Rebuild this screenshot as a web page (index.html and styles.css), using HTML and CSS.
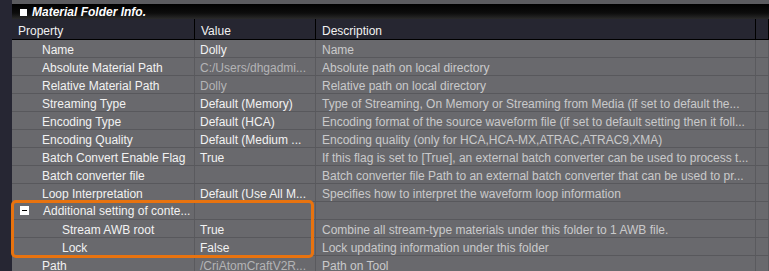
FILE: index.html
```html
<!DOCTYPE html>
<html lang="en">
<head>
  <meta charset="UTF-8">
  <title>Material Folder Info.</title>
  <link rel="stylesheet" href="styles.css">
</head>
<body>
  <div class="panel">
    <div class="side"></div>
    <div class="main">
      <div class="topline"></div>
      <div class="title-bar">
        <span class="check"></span>
        <span class="title">Material Folder Info.</span>
      </div>
      <div class="grid">
        <div class="row head">
          <div class="cell">Property</div>
          <div class="cell">Value</div>
          <div class="cell">Description</div>
          <div class="cell"></div>
        </div>
        <div class="row">
          <div class="cell prop">Name</div>
          <div class="cell">Dolly</div>
          <div class="cell desc">Name</div>
          <div class="cell"></div>
        </div>
        <div class="row">
          <div class="cell prop">Absolute Material Path</div>
          <div class="cell ro">C:/Users/dhgadmi...</div>
          <div class="cell desc">Absolute path on local directory</div>
          <div class="cell"></div>
        </div>
        <div class="row">
          <div class="cell prop">Relative Material Path</div>
          <div class="cell ro">Dolly</div>
          <div class="cell desc">Relative path on local directory</div>
          <div class="cell"></div>
        </div>
        <div class="row">
          <div class="cell prop">Streaming Type</div>
          <div class="cell">Default (Memory)</div>
          <div class="cell desc">Type of Streaming, On Memory or Streaming from Media (if set to default the...</div>
          <div class="cell"></div>
        </div>
        <div class="row">
          <div class="cell prop">Encoding Type</div>
          <div class="cell">Default (HCA)</div>
          <div class="cell desc">Encoding format of the source waveform file (if set to default setting then it foll...</div>
          <div class="cell"></div>
        </div>
        <div class="row">
          <div class="cell prop">Encoding Quality</div>
          <div class="cell">Default (Medium ...</div>
          <div class="cell desc">Encoding quality (only for HCA,HCA-MX,ATRAC,ATRAC9,XMA)</div>
          <div class="cell"></div>
        </div>
        <div class="row">
          <div class="cell prop">Batch Convert Enable Flag</div>
          <div class="cell">True</div>
          <div class="cell desc">If this flag is set to [True], an external batch converter can be used to process t...</div>
          <div class="cell"></div>
        </div>
        <div class="row">
          <div class="cell prop">Batch converter file</div>
          <div class="cell"></div>
          <div class="cell desc">Batch converter file Path to an external batch converter that can be used to pr...</div>
          <div class="cell"></div>
        </div>
        <div class="row">
          <div class="cell prop">Loop Interpretation</div>
          <div class="cell">Default (Use All M...</div>
          <div class="cell desc">Specifies how to interpret the waveform loop information</div>
          <div class="cell"></div>
        </div>
        <div class="group">
          <div class="row">
            <div class="cell prop toggle"><span class="minus"></span>Additional setting of conte...</div>
            <div class="cell"></div>
            <div class="cell desc"></div>
            <div class="cell"></div>
          </div>
          <div class="row">
            <div class="cell prop sub">Stream AWB root</div>
            <div class="cell">True</div>
            <div class="cell desc">Combine all stream-type materials under this folder to 1 AWB file.</div>
            <div class="cell"></div>
          </div>
          <div class="row">
            <div class="cell prop sub">Lock</div>
            <div class="cell">False</div>
            <div class="cell desc">Lock updating information under this folder</div>
            <div class="cell"></div>
          </div>
        </div>
        <div class="row">
          <div class="cell prop">Path</div>
          <div class="cell ro">/CriAtomCraftV2R...</div>
          <div class="cell desc">Path on Tool</div>
          <div class="cell"></div>
        </div>
      </div>
    </div>
  </div>
</body>
</html>
```

FILE: styles.css
```css
html, body {
  margin: 0;
  height: 100%;
  overflow: hidden;
  background: #69696d;
}
.panel {
  display: flex;
  height: 271px;
  font-family: "Liberation Sans", Arial, sans-serif;
  font-size: 12px;
}
.side {
  width: 12px;
  flex: none;
  background: #262633;
}
.main {
  flex: 1;
  display: flex;
  flex-direction: column;
  min-width: 0;
}
.main > * {
  flex: none;
}
.topline {
  height: 4px;
  background: #5b5b5f;
}
.title-bar {
  height: 15px;
  display: flex;
  align-items: center;
  gap: 5px;
  padding-left: 8px;
  padding-top: 1px;
  box-sizing: border-box;
  background: linear-gradient(#000 0%, #0c0c0c 60%, #2a2a2a 100%);
}
.check {
  width: 7px;
  height: 7px;
  background: #fff;
}
.title {
  color: #fff;
  font-weight: bold;
  font-style: italic;
  font-size: 12px;
}
.grid {
  display: flex;
  flex-direction: column;
}
.grid > * {
  flex: none;
}
.row {
  display: grid;
  grid-template-columns: 183px 121px 440px 1fr;
  height: 18px;
  border-bottom: 1px solid #58585c;
  box-sizing: border-box;
}
.cell {
  color: #f2f2f2;
  line-height: 17px;
  padding-top: 2px;
  padding-left: 5px;
  white-space: nowrap;
  overflow: hidden;
  border-right: 1px solid #5a5a5e;
}
.row.head {
  height: 21px;
  background: #262631;
  border-bottom: 1px solid #000;
}
.head .cell {
  line-height: 20px;
  padding-top: 2px;
  padding-left: 6px;
  border-right-color: #000;
}
.prop {
  padding-left: 30px;
}
.prop.sub {
  padding-left: 50px;
}
.prop.toggle {
  padding-left: 8px;
  display: flex;
  align-items: center;
  gap: 14px;
}
.minus {
  width: 9px;
  height: 9px;
  margin-top: -2px;
  background: #fff;
  position: relative;
  flex: none;
}
.minus::after {
  content: "";
  position: absolute;
  left: 2px;
  right: 2px;
  top: 4px;
  height: 1px;
  background: #000;
}
.ro {
  color: #b4b4b6;
}
.desc {
  color: #c9c9cb;
  padding-left: 6px;
}
.group {
  position: relative;
}
.group::after {
  content: "";
  position: absolute;
  left: -1px;
  top: -2px;
  width: 303px;
  bottom: -2px;
  border: 3px solid #e8730f;
  border-radius: 5px;
  box-sizing: border-box;
  pointer-events: none;
}
```
